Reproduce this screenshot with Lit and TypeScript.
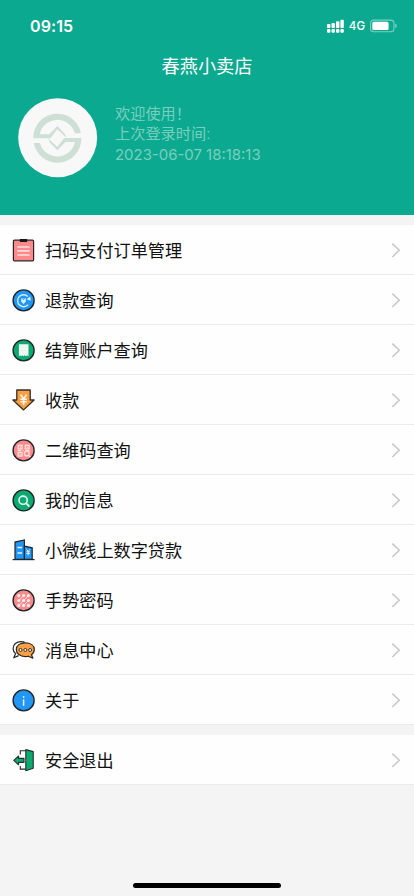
import { LitElement, html, css, svg } from "lit";
import { customElement, property } from "lit/decorators.js";

const disc = (fill: string) =>
  svg`<circle cx="12" cy="12" r="10.5" fill=${fill} stroke="#20262a" stroke-width="1.4"/>`;

const icons: Record<string, unknown> = {
  orders: svg`
    <rect x="1.8" y="1.8" width="20.2" height="20.6" rx="1" fill="#fd8a8b" stroke="#2b2426" stroke-width="1.2"/>
    <rect x="8.2" y=".6" width="7.4" height="3" rx=".6" fill="#171717"/>
    <path d="M6.4 8.6h11M6.4 12.5h11M6.4 16.6h11" stroke="#ffe0e0" stroke-width="1.7" stroke-linecap="round"/>`,
  refund: svg`${disc("#2196f3")}
    <path d="M16.2 8A6 6 0 1 0 16.5 16.3" fill="none" stroke="#cdeaff" stroke-width="1.4"/>
    <path d="M15 10.9l4 1.5-.3-4.2z" fill="#e4f4ff"/>
    <path d="M9.6 9.8h4.6v3.2L11.9 15.8l-2.3-2.8z" fill="#d9efff"/>
    <path d="M10.7 9.5l1.2 2 1.2-2" fill="none" stroke="#2196f3" stroke-width=".8"/>`,
  account: svg`${disc("#0baa70")}
    <path d="M7.3 5.8h9.6v12l-1.3-.9-1.2.9-1.2-.9-1.2.9-1.2-.9-1.2.9-1.1-.9-1.2.9z" fill="#f3f7f4"/>
    <path d="M9.4 9h5.4M9.4 12h5.4" stroke="#dfebe5" stroke-width=".6"/>`,
  collect: svg`
    <path d="M5.2 1.6h13.4v10H22.5L12 21.5 1.3 11.6h3.9z" fill="#fa9f43" stroke="#342d28" stroke-width="1.3" stroke-linejoin="round"/>
    <path d="M9 6.2l3 4.2 3-4.2M8.7 10.9h6.6M8.7 13.4h6.6M12 10.4v6.1" fill="none" stroke="#fff5e8" stroke-width="1.6"/>`,
  qrcode: svg`${disc("#fd8a8b")}
    <g fill="none" stroke="#ffe0e0" stroke-width="1.3">
      <rect x="6.6" y="6.9" width="3.8" height="3.6"/><rect x="13.7" y="6.9" width="3.8" height="3.6"/>
      <rect x="6.6" y="14" width="3.8" height="3.6"/><circle cx="15.2" cy="15.2" r="2.4"/>
      <path d="M17 17l1.7 1.7M6 12.2h3.5M11 12.2h1M13.5 12.2h4.5"/>
    </g><path d="M8 8.1h1.2v1.2H8zM15 8.1h1.2v1.2H15zM8 15.2h1.2v1.2H8z" fill="#ffe0e0"/>`,
  profile: svg`${disc("#0baa70")}
    <circle cx="11.5" cy="11.8" r="4.1" fill="none" stroke="#e4fbf2" stroke-width="1.6"/>
    <path d="M14.6 15l2.7 2.6" stroke="#e4fbf2" stroke-width="1.8" stroke-linecap="round"/>`,
  loan: svg`
    <path d="M3.4 20.9V3.7l9.4-2.2v19.4z" fill="#2196f3" stroke="#20262a" stroke-width="1.2"/>
    <path d="M12.8 7.7l7.8 1.7v11.5h-7.8z" fill="#2196f3" stroke="#20262a" stroke-width="1.2"/>
    <path d="M1 21.2h22" stroke="#20262a" stroke-width="1.2"/>
    <path d="M5.8 9.1h4.7M5.8 14.6h4.7" stroke="#e5f4ff" stroke-width="1.4"/>
    <path d="M14.9 11l1.7 2 1.7-2M14.8 13.4h3.6M14.8 15.1h3.6M16.6 13v4" fill="none" stroke="#d8efff" stroke-width="1"/>`,
  gesture: svg`${disc("#fd8a8b")}
    <path d="M7.2 12.3l4.8-5M7.2 17l9.6-9.7M12 17l4.8-4.7" stroke="#ffe1e1" stroke-width="1"/>
    ${[7.2, 12.1, 17].map((y) => [7.2, 12, 16.8].map((x) => svg`<circle cx=${x} cy=${y} r="1.6" fill="#ffebeb"/>`))}`,
  message: svg`
    <path d="M13 4C11.9 3.4 10.8 3.2 9.5 3.2 4.8 3.2 1.5 6 1.5 10.1c0 2.1 1 3.9 2.5 5.1L2.2 19.4l4.8-2.2" fill="#fff" stroke="#292725" stroke-width="1.2" stroke-linejoin="round"/>
    <path d="M13.7 4.5c5.3 0 9 2.5 9 6.5 0 2.3-1.1 4.1-2.8 5.3l1.4 3.5-4.5-2c-1 .3-2 .4-3.1.4-5.3 0-9-3-9-7.1s3.7-6.6 9-6.6z" fill="#fa9f43" stroke="#292725" stroke-width="1.2" stroke-linejoin="round"/>
    <g fill="#fff3df" stroke="#292725" stroke-width=".9"><circle cx="8.9" cy="11.6" r="1.5"/><circle cx="13.7" cy="11.6" r="1.5"/><circle cx="18.5" cy="11.6" r="1.5"/></g>`,
  about: svg`${disc("#2196f3")}
    <path d="M12 11v6.4" stroke="#e8f5ff" stroke-width="1.5"/><circle cx="12" cy="8.6" r=".9" fill="#e8f5ff"/>`,
  logout: svg`
    <path d="M8.7 6.2V2.3h5.7M8.7 17.5v3.2h5.7" fill="none" stroke="#272b29" stroke-width="1.1"/>
    <path d="M14.2 1.2l7.4 2v16.7l-7.4 2.4z" fill="#0baa70" stroke="#24302b" stroke-width="1.1" stroke-linejoin="round"/>
    <path d="M2.2 12L7 7.6V10h5.4v4H7v2.4z" fill="#0baa70" stroke="#24302b" stroke-width="1.1" stroke-linejoin="round"/>
    <circle cx="15" cy="12" r="1" fill="#6e7a73"/>`,
};

@customElement("menu-row")
class MenuRow extends LitElement {
  @property() icon = "";
  @property() label = "";

  static styles = css`
    :host {
      display: flex;
      align-items: center;
      box-sizing: border-box;
      height: 50px;
      padding: 1px 13px 0 12px;
      background: #fefefe;
      border-bottom: 1px solid #ececec;
    }
    .icon { width: 24px; height: 24px; flex: none; overflow: visible; }
    .label { flex: 1; margin-left: 9px; padding-top: 1px; font-size: 17.15px; line-height: 24px; color: #111; }
    .chevron { width: 10px; height: 16px; flex: none; }
  `;

  render() {
    return html`
      <svg class="icon" viewBox="0.4 -0.4 24 24">${icons[this.icon]}</svg>
      <span class="label">${this.label}</span>
      <svg class="chevron" viewBox="0 0 10 16">
        <path d="M1.3 1.6L8.3 8.3L1.3 15" fill="none" stroke="#c7c7c7" stroke-width="1.5"/>
      </svg>`;
  }
}

@customElement("app-root")
class AppRoot extends LitElement {
  static styles = css`
    :host {
      display: flex;
      flex-direction: column;
      height: 896px;
      background: #f4f4f4;
      font-family: "Liberation Sans", "Noto Sans CJK SC", sans-serif;
      overflow: hidden;
    }
    .header { height: 215px; background: #0ba98f; color: #fff; flex: none; }
    .status { display: flex; justify-content: space-between; align-items: center; height: 51px; padding: 0 17px 0 30px; }
    .time { font: 600 16px/20px Inter, sans-serif; letter-spacing: 0.1px; }
    .signals { display: flex; align-items: center; }
    .bars { width: 17px; height: 14px; margin-right: 5px; }
    .network { font: 500 11.5px/14px Inter, sans-serif; margin-right: 5px; }
    .battery { width: 27px; height: 14px; }
    .title { margin: 0; padding-top: 1px; text-align: center; font-size: 18.2px; font-weight: 400; line-height: 30px; }
    .account { display: flex; padding: 16px 0 0 18px; }
    .avatar { width: 80px; height: 80px; flex: none; }
    .welcome { margin: 6px 0 0 17px; color: #79cfbf; font-size: 15.2px; line-height: 20px; }
    .date { font-family: Inter, sans-serif; font-size: 14.95px; line-height: 22px; white-space: nowrap; }
    .group { margin-top: 10px; }
    .home { width: 148px; height: 5px; border-radius: 3px; background: #000; margin: auto auto 8.5px; }
  `;

  private items = [
    ["orders", "扫码支付订单管理"],
    ["refund", "退款查询"],
    ["account", "结算账户查询"],
    ["collect", "收款"],
    ["qrcode", "二维码查询"],
    ["profile", "我的信息"],
    ["loan", "小微线上数字贷款"],
    ["gesture", "手势密码"],
    ["message", "消息中心"],
    ["about", "关于"],
  ];

  render() {
    const half = "M46 121A72 72 0 0 1 188.8 106H170.4A54 54 0 0 0 65.2 109H94L118 84L140 107L146 120L118 94L97 121Z";
    return html`
      <header class="header">
        <div class="status">
          <span class="time">09:15</span>
          <div class="signals">
            <svg class="bars" viewBox="0 0 17 14" fill="#fff">
              <rect x="0" y="5" width="3.4" height="4" rx=".8"/><rect x="4.5" y="4" width="3.4" height="5" rx=".8"/>
              <rect x="9" y="2.3" width="3.4" height="6.7" rx=".8"/><rect x="13.4" y=".8" width="3.4" height="8.2" rx=".8"/>
              <rect x="0" y="10" width="3.4" height="3.8" rx="1"/><rect x="4.5" y="10" width="3.4" height="3.8" rx="1"/>
              <rect x="9" y="10" width="3.4" height="3.8" rx="1"/><rect x="13.4" y="10" width="3.4" height="3.8" rx="1"/>
            </svg>
            <span class="network">4G</span>
            <svg class="battery" viewBox="0 0 27 14">
              <rect x=".6" y="1.1" width="23.4" height="11.6" rx="3.3" fill="none" stroke="#7fd0c2" stroke-width="1.1"/>
              <rect x="2.3" y="2.8" width="16.3" height="8.2" rx="1.6" fill="#fff"/>
              <path d="M25.2 4.8c2 .7 2 3.5 0 4.2z" fill="#7fd0c2"/>
            </svg>
          </div>
        </div>
        <h1 class="title">春燕小卖店</h1>
        <div class="account">
          <svg class="avatar" viewBox="0 0 240 240">
            <circle cx="119" cy="119" r="118.5" fill="#f8f8f8"/>
            <g fill="#cedfd6">
              <path d=${half}/>
              <path d=${half} transform="rotate(180 118 120.5)"/>
            </g>
          </svg>
          <div class="welcome">
            <div>欢迎使用！</div>
            <div>上次登录时间:</div>
            <div class="date">2023-06-07 18:18:13</div>
          </div>
        </div>
      </header>
      <main>
        <section class="group">
          ${this.items.map(([icon, label]) => html`<menu-row icon=${icon} label=${label}></menu-row>`)}
        </section>
        <section class="group">
          <menu-row icon="logout" label="安全退出"></menu-row>
        </section>
      </main>
      <div class="home"></div>`;
  }
}
